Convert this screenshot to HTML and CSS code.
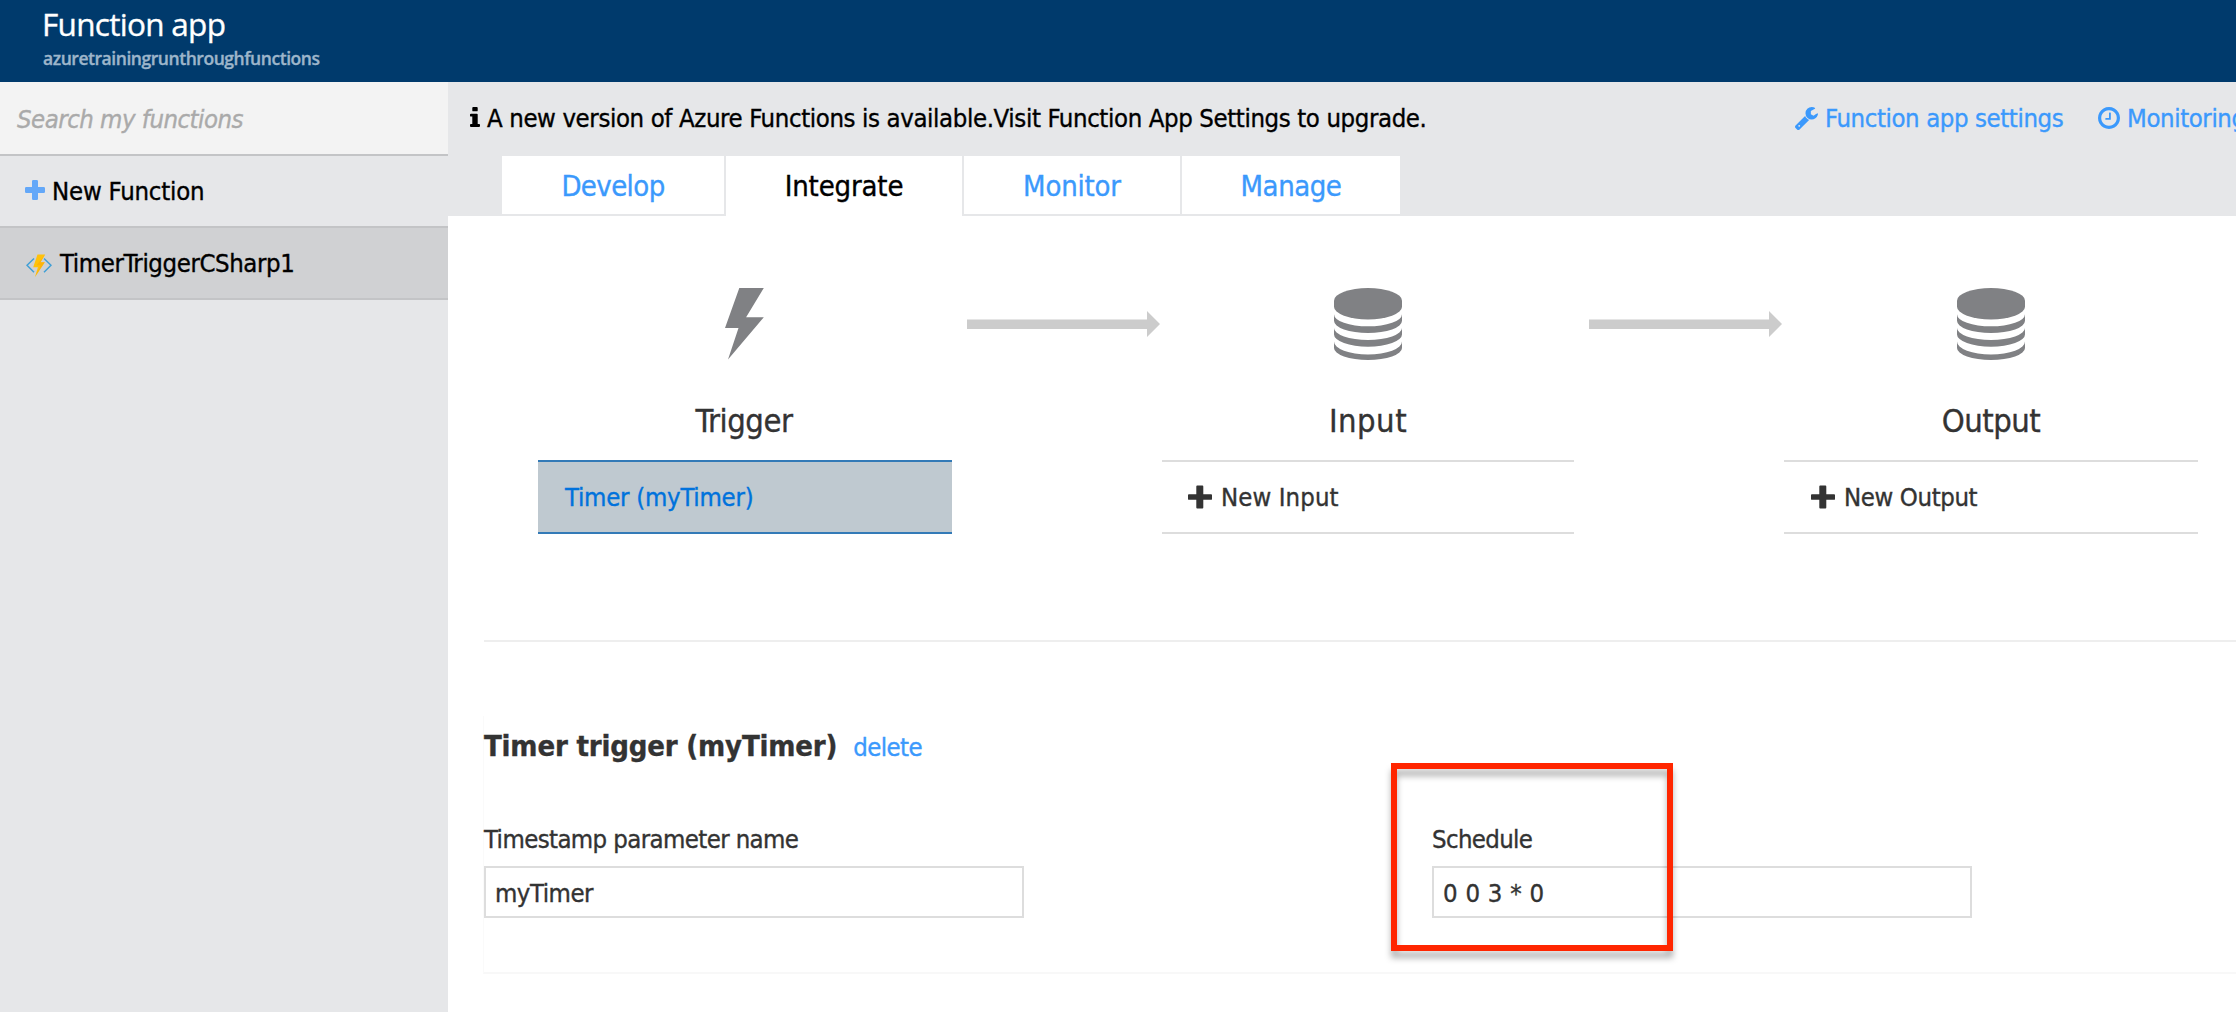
FILE: index.html
```html
<!DOCTYPE html>
<html lang="en">
<head>
<meta charset="utf-8">
<title>Function app</title>
<link rel="stylesheet" href="styles.css">
</head>
<body>
<header class="header">
  <h1 class="header-title">Function app</h1>
  <p class="header-sub">azuretrainingrunthroughfunctions</p>
</header>
<div class="shell">
  <aside class="sidebar">
    <div class="search">Search my functions</div>
    <div class="side-item side-new">
      <svg class="side-plus" viewBox="0 0 20 20"><path d="M8.300 0h3.400q1.300 0 1.300 1.300V7h5.700q1.300 0 1.300 1.300v3.400q0 1.300-1.300 1.300H13v5.700q0 1.300-1.300 1.300H8.300Q7 20 7 18.700V13H1.300Q0 13 0 11.700V8.300Q0 7 1.300 7H7V1.300Q7 0 8.300 0z"/></svg>
      <span>New Function</span>
    </div>
    <div class="side-item side-active">
      <svg class="side-fn" viewBox="0 0 26 23">
        <path d="M8 4.500L1 11.300l7 7M18 4.500l7 6.800-7 7" fill="none" stroke="#3f9fd6" stroke-width="1.500"/>
        <path d="M11.500.500h7.700l-4.700 7.700h4.300L9 23l2.900-9.700H7.200z" fill="#ffc20a"/>
        <path d="M19.200.500l-4.700 7.700h4.300L9 23l5.500-11.800h-4z" fill="#fda906" opacity=".6"/>
      </svg>
      <span>TimerTriggerCSharp1</span>
    </div>
  </aside>
  <main class="main">
    <div class="top">
      <div class="notice-row">
        <div class="notice">
          <svg class="info" viewBox="0 0 10 20"><path d="M3.200 0h3.600q.900 0 .900.900v2.500q0 .900-.900.900H3.200q-.900 0-.900-.900V.900q0-.900.900-.900zM1 6.700h5.800q.900 0 .900.900v9.300H9q1 0 1 .900v1.300q0 .900-1 .900H1q-1 0-1-.900v-1.300q0-.900 1-.900h1.300V9.600H1q-1 0-1-.900V7.600q0-.900 1-.900z"/></svg>
          <span>A new version of Azure Functions is available.Visit Function App Settings to upgrade.</span>
        </div>
        <a class="top-link link-settings">
          <svg class="wrench" viewBox="85 128 1641 1643"><path d="M448 1472q0-26-19-45t-45-19-45 19-19 45 19 45 45 19 45-19 19-45zm644-420l-682 682q-37 37-90 37-52 0-91-37l-106-108q-38-36-38-90 0-53 38-91l681-681q39 98 114.500 173.500t173.500 114.500zm634-435q0 39-23 106-47 134-164.500 217.500t-258.500 83.500q-185 0-316.500-131.500t-131.500-316.500 131.500-316.500 316.500-131.500q58 0 121.500 16.500t107.500 46.500q16 11 16 28t-16 28l-293 169v224l193 107q5-3 79-48.500t135.500-81 70.500-35.500q15 0 23.500 10t8.500 25z"/></svg>
          <span>Function app settings</span>
        </a>
        <a class="top-link">
          <svg class="clock" viewBox="128 128 1536 1536"><path d="M1024 544v448q0 14-9 23t-23 9h-320q-14 0-23-9t-9-23v-64q0-14 9-23t23-9h224v-352q0-14 9-23t23-9h64q14 0 23 9t9 23zm416 352q0-148-73-273t-198-198-273-73-273 73-198 198-73 273 73 273 198 198 273 73 273-73 198-198 73-273zm224 0q0 209-103 385.500t-279.500 279.500-385.500 103-385.500-103-279.500-279.500-103-385.500 103-385.500 279.500-279.500 385.500-103 385.500 103 279.500 279.500 103 385.500z"/></svg>
          <span>Monitoring</span>
        </a>
      </div>
      <nav class="tabs">
        <a class="tab tab-develop">Develop</a>
        <a class="tab tab-integrate">Integrate</a>
        <a class="tab tab-monitor">Monitor</a>
        <a class="tab tab-manage">Manage</a>
      </nav>
    </div>

    <section class="flow">
      <div class="stage">
        <svg class="stage-icon bolt" viewBox="0 0 39 72"><path d="M14.300 0H38.800L21.100 29.300H38.800L3 71.500 13.500 40H0z"/></svg>
        <h2 class="stage-name name-trigger">Trigger</h2>
        <div class="binding binding-active">Timer (myTimer)</div>
      </div>
      <svg class="arrow" viewBox="0 0 193 26"><path d="M0 8.500H180V0l13 13-13 13V18H0z"/></svg>
      <div class="stage">
        <svg class="stage-icon" viewBox="0 0 68 72">
          <path d="M0 12.700a34 12.700 0 0 1 68 0v6a34 12.700 0 0 1-68 0z"/>
          <path d="M0 26.300a34 12 0 0 0 68 0v6.400a34 12.300 0 0 1-68 0z"/>
          <path d="M0 40a34 12 0 0 0 68 0v6.400a34 12.300 0 0 1-68 0z"/>
          <path d="M0 53.500a34 13 0 0 0 68 0v6.400a34 12.100 0 0 1-68 0z"/>
        </svg>
        <h2 class="stage-name name-input">Input</h2>
        <div class="binding binding-input">
          <svg class="plus" viewBox="0 0 24 24"><path d="M9.200.500h5.200q.900 0 .900.900v7.800h7.800q.900 0 .900.900v3.800q0 .900-.900.900h-7.800v7.800q0 .900-.900.900H9.200q-.900 0-.900-.900v-7.800H.900Q0 14.800 0 13.900v-3.800q0-.900.900-.900h7.400V1.400q0-.900.900-.900z"/></svg>
          <span>New Input</span>
        </div>
      </div>
      <svg class="arrow" viewBox="0 0 193 26"><path d="M0 8.500H180V0l13 13-13 13V18H0z"/></svg>
      <div class="stage">
        <svg class="stage-icon" viewBox="0 0 68 72">
          <path d="M0 12.700a34 12.700 0 0 1 68 0v6a34 12.700 0 0 1-68 0z"/>
          <path d="M0 26.300a34 12 0 0 0 68 0v6.400a34 12.300 0 0 1-68 0z"/>
          <path d="M0 40a34 12 0 0 0 68 0v6.400a34 12.300 0 0 1-68 0z"/>
          <path d="M0 53.500a34 13 0 0 0 68 0v6.400a34 12.100 0 0 1-68 0z"/>
        </svg>
        <h2 class="stage-name name-output">Output</h2>
        <div class="binding binding-output">
          <svg class="plus" viewBox="0 0 24 24"><path d="M9.200.500h5.200q.900 0 .900.900v7.800h7.800q.900 0 .900.900v3.800q0 .900-.900.900h-7.800v7.800q0 .900-.900.900H9.200q-.900 0-.900-.900v-7.800H.900Q0 14.800 0 13.900v-3.800q0-.900.900-.900h7.400V1.400q0-.900.900-.900z"/></svg>
          <span>New Output</span>
        </div>
      </div>
    </section>

    <hr class="rule">

    <section class="panel">
      <div class="panel-head">
        <h3 class="panel-title">Timer trigger (myTimer)</h3><a class="delete">delete</a>
      </div>
      <div class="fields">
        <div class="field">
          <label class="label label-name">Timestamp parameter name</label>
          <div class="box box-name">myTimer</div>
        </div>
        <div class="field">
          <label class="label label-schedule">Schedule</label>
          <div class="box box-schedule">0 0 3 * 0</div>
          <div class="highlight"></div>
        </div>
      </div>
    </section>
  </main>
</div>
</body>
</html>
```
FILE: styles.css
```css
* { box-sizing: border-box; }

html, body { height: 100%; }

body {
  margin: 0;
  display: flex;
  flex-direction: column;
  overflow: hidden;
  background: #fff;
  color: #333;
  font: 25.5px "DejaVu Sans Condensed", "DejaVu Sans", sans-serif;
  font-stretch: condensed;
  letter-spacing: -0.4px;
  white-space: nowrap;
  -webkit-text-stroke: 0.35px currentColor;
}

svg { display: block; flex: none; fill: currentColor; }
h1, h2, h3, p { margin: 0; font-weight: normal; }

/* Header */
.header {
  flex: none;
  height: 82px;
  padding: 4px 0 0 42px;
  background: #003a6c;
  font-family: "Open Sans", sans-serif;
  font-stretch: normal;
}
.header-title {
  color: #fff;
  font-size: 31.5px;
  line-height: 40px;
  letter-spacing: -0.7px;
}
.header-sub {
  margin: 2px 0 0 1px;
  color: #9db5ca;
  font-size: 17.5px;
  font-weight: 600;
  line-height: 24px;
  letter-spacing: -0.45px;
}

.shell { flex: 1; display: flex; min-height: 0; }

/* Sidebar */
.sidebar { flex: none; width: 448px; background: #e6e7e9; color: #000; }
.search {
  height: 74px;
  padding: 1px 0 0 17px;
  border-bottom: 2px solid #c3c4c6;
  background: #f3f3f3;
  color: #aaa;
  font-style: italic;
  line-height: 72px;
  letter-spacing: -0.5px;
}
.side-item {
  display: flex;
  align-items: center;
  height: 72px;
  border-bottom: 2px solid #c3c4c6;
}
.side-new { gap: 7px; padding-left: 25px; letter-spacing: -0.2px; }
.side-active { gap: 8px; padding-left: 26px; background: #d0d1d3; letter-spacing: -0.4px; }
.side-plus { width: 20px; height: 20px; margin-top: -2px; color: #64a8f8; }
.side-fn { width: 26px; height: 23px; margin-top: 5px; }

/* Main column */
.main { flex: 1; min-width: 0; overflow: hidden; }
.top { height: 134px; background: #e6e7e9; }
.notice-row { display: flex; height: 74px; padding: 0 0 2px 22px; }
.notice {
  display: flex;
  flex: none;
  align-items: center;
  gap: 7px;
  width: 1325px;
  color: #000;
  letter-spacing: -0.38px;
}
.info { width: 10px; height: 20px; margin-top: -2px; }
.top-link { display: flex; flex: none; align-items: center; gap: 7px; color: #3b99fc; }
.link-settings { width: 303px; }
.wrench { width: 23px; height: 23px; margin-top: 1px; }
.clock { width: 22px; height: 22px; }

/* Tabs */
.tabs { display: flex; padding-left: 54px; }
.tab {
  height: 60px;
  padding-top: 2px;
  border-bottom: 2px solid #e6e7e9;
  background: #fff;
  color: #3b99fc;
  font-size: 29px;
  line-height: 57px;
  text-align: center;
}
.tab-develop { width: 224px; border-right: 2px solid #e6e7e9; letter-spacing: -0.6px; }
.tab-integrate { width: 236px; border-bottom-color: #fff; color: #000; letter-spacing: -0.16px; }
.tab-monitor { width: 218px; border-left: 2px solid #e6e7e9; letter-spacing: -0.2px; }
.tab-manage { width: 220px; border-left: 2px solid #e6e7e9; letter-spacing: -0.47px; }

/* Trigger / input / output */
.flow {
  display: grid;
  grid-template-columns: 414px 210px 412px 210px 414px;
  padding: 72px 0 0 90px;
}
.stage { display: flex; flex-direction: column; }
.stage-icon { align-self: center; width: 68px; height: 72px; color: #808184; }
.stage-icon.bolt { width: 39px; margin-right: 2px; }
.stage-name {
  margin: 41px 0 19px;
  font-size: 32.5px;
  line-height: 40px;
  text-align: center;
}
.name-trigger { padding-right: 2px; letter-spacing: -0.45px; }
.name-input { letter-spacing: 0.5px; }
.name-output { letter-spacing: -0.5px; }
.binding {
  display: flex;
  align-items: center;
  gap: 9px;
  height: 74px;
  padding-left: 26px;
  border-top: 2px solid #ddd;
  border-bottom: 2px solid #ddd;
}
.binding-active {
  padding-left: 27px;
  border-color: #337ab7;
  background: #bfc9d0;
  color: #0072dc;
  letter-spacing: -0.25px;
}
.binding-input { letter-spacing: 0.1px; }
.binding-output { padding-left: 27px; letter-spacing: -0.38px; }
.plus { width: 24px; height: 24px; }
.arrow { width: 193px; height: 26px; margin: 23px 0 0 15px; color: #ccc; }

.rule { height: 2px; margin: 106px 0 0 36px; border: 0; background: #eee; }

/* Binding editor */
.panel {
  margin: 74px 0 0 35px;
  padding-top: 10px;
  padding-bottom: 54px;
  border-left: 1px solid #fafafa;
  border-bottom: 2px solid #f8f8f8;
}
.panel-head { display: flex; align-items: baseline; height: 40px; line-height: 40px; }
.panel-title { font-size: 29px; font-weight: bold; letter-spacing: -0.18px; }
.delete { margin-left: 16px; color: #3b99fc; letter-spacing: -0.58px; }
.fields { display: flex; gap: 408px; margin-top: 53px; }
.field { position: relative; flex: none; width: 540px; }
.label { display: block; line-height: 40px; }
.label-name { letter-spacing: -0.6px; }
.label-schedule { letter-spacing: -0.65px; }
.box {
  height: 52px;
  margin-top: 7px;
  padding: 1px 0 0 9px;
  border: 2px solid #ddd;
  line-height: 48px;
}
.box-name { letter-spacing: -0.48px; }
.box-schedule { letter-spacing: 0.25px; }

/* Marker drawn over the schedule field */
.highlight {
  position: absolute;
  left: -41px;
  top: -56px;
  width: 282px;
  height: 188px;
  border: 6px solid #ff2600;
  filter: drop-shadow(0 7px 3px rgba(0, 0, 0, 0.3));
}
```
